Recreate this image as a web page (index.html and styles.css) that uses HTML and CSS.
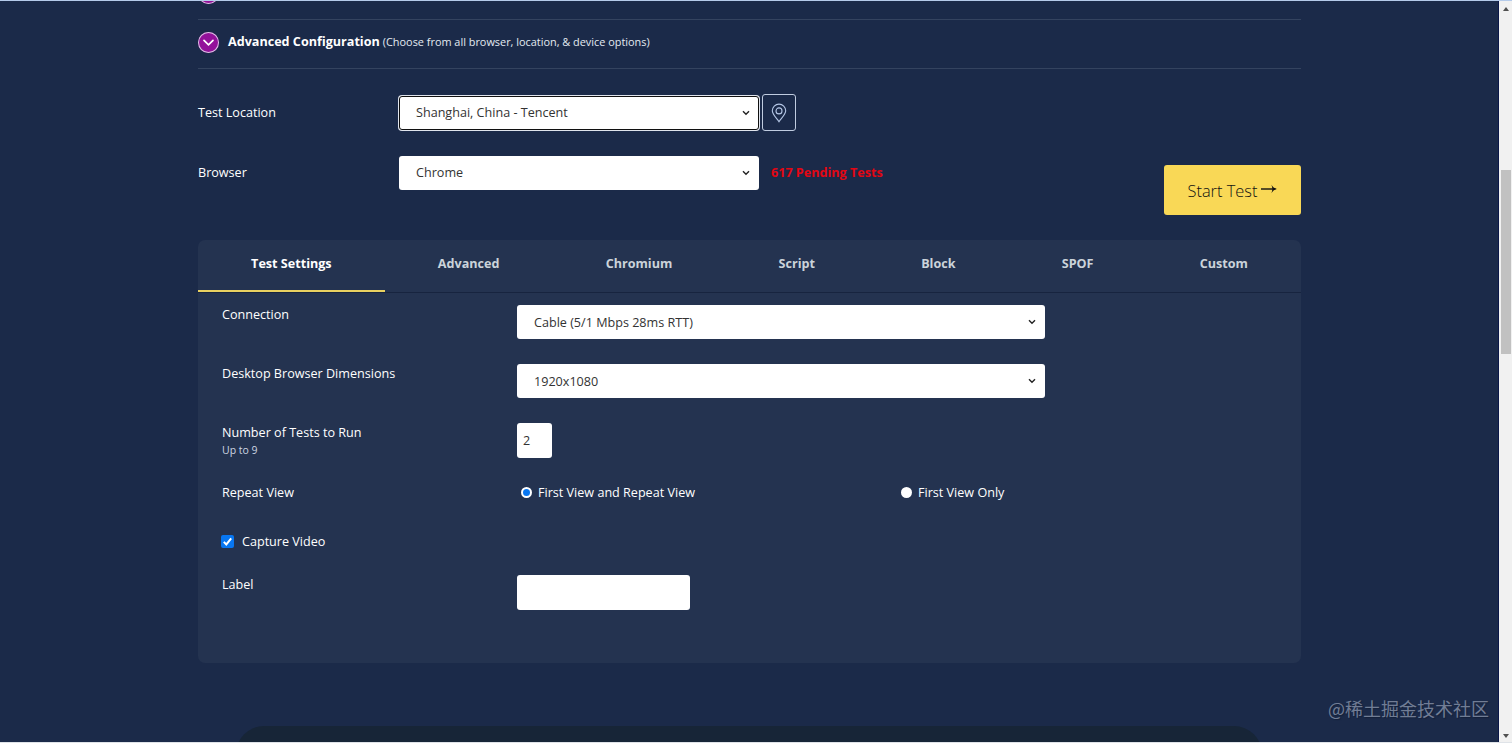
FILE: index.html
```
<!DOCTYPE html>
<html lang="en">
<head>
  <meta charset="UTF-8">
  <title>Advanced Configuration</title>
  <link rel="stylesheet" href="styles.css">
</head>
<body>

<div class="page">
  <main class="content">
    <form class="test-form" onsubmit="event.preventDefault();">
      <div class="previous-option">
        <span class="toggle-icon"></span>
      </div>

      <div class="option-heading">
        <span class="toggle-icon">
          <svg width="21" height="21" viewBox="0 0 21 21"><path d="M6 8.3l4.5 4.6L15 8.3"/></svg>
        </span>
        <strong>Advanced Configuration</strong>
        <small>(Choose from all browser, location, &amp; device options)</small>
      </div>

      <div class="start-area">
        <div class="basic-fields">
          <div class="basic-row">
            <label for="location">Test Location</label>
            <div class="select-wrap focused">
              <select id="location"><option>Shanghai, China - Tencent</option></select>
              <svg class="chevron" width="8" height="6" viewBox="0 0 8 6"><path d="M1 1.2l3 3 3-3"/></svg>
            </div>
            <button type="button" class="map-button" aria-label="Select from map">
              <svg width="16" height="20" viewBox="0 0 16 20">
                <path d="M8 18.7C6 15.6 1.3 11.5 1.3 7.8a6.7 6.7 0 0 1 13.4 0C14.7 11.5 10 15.6 8 18.7z"/>
                <circle cx="8" cy="7.9" r="3"/>
              </svg>
            </button>
          </div>
          <div class="basic-row">
            <label for="browser">Browser</label>
            <div class="select-wrap">
              <select id="browser"><option>Chrome</option></select>
              <svg class="chevron" width="8" height="6" viewBox="0 0 8 6"><path d="M1 1.2l3 3 3-3"/></svg>
            </div>
            <span class="pending">617 Pending Tests</span>
          </div>
        </div>
        <button type="submit" class="start-button">
          <span>Start Test</span>
          <svg width="16" height="10" viewBox="0 0 16 10"><path d="M0 5h14.5"/><path class="head" d="M10.5 .8C11.6 3 13.2 4.4 16 5c-2.8.6-4.4 2-5.5 4.2l1-4.2z"/></svg>
        </button>
      </div>

      <section class="settings">
        <ul class="tabs">
          <li class="active">Test Settings</li>
          <li>Advanced</li>
          <li>Chromium</li>
          <li>Script</li>
          <li>Block</li>
          <li>SPOF</li>
          <li>Custom</li>
        </ul>

        <div class="fields">
          <div class="field">
            <label for="connection">Connection</label>
            <div class="select-wrap">
              <select id="connection"><option>Cable (5/1 Mbps 28ms RTT)</option></select>
              <svg class="chevron" width="8" height="6" viewBox="0 0 8 6"><path d="M1 1.2l3 3 3-3"/></svg>
            </div>
          </div>
          <div class="field">
            <label for="resolution">Desktop Browser Dimensions</label>
            <div class="select-wrap">
              <select id="resolution"><option>1920x1080</option></select>
              <svg class="chevron" width="8" height="6" viewBox="0 0 8 6"><path d="M1 1.2l3 3 3-3"/></svg>
            </div>
          </div>
          <div class="field field-runs">
            <label for="runs">Number of Tests to Run<small>Up to 9</small></label>
            <input type="text" id="runs" class="runs" value="2">
          </div>
          <div class="field field-repeat">
            <span>Repeat View</span>
            <div class="radios">
              <label><input type="radio" name="fvonly" checked>First View and Repeat View</label>
              <label><input type="radio" name="fvonly">First View Only</label>
            </div>
          </div>
          <label class="field-video">
            <input type="checkbox" checked>
            <svg class="tick" width="13" height="13" viewBox="0 0 13 13"><path d="M2.8 6.9l2.5 2.5 4.9-6"/></svg>
            Capture Video
          </label>
          <div class="field">
            <label for="label">Label</label>
            <input type="text" id="label" class="label-input">
          </div>
        </div>
      </section>
    </form>

    <div class="next-section"></div>
  </main>

  <div class="scrollbar">
    <svg width="6" height="4" viewBox="0 0 6 4"><path d="M0 4l3-4 3 4z"/></svg>
    <div class="track"><div class="thumb"></div></div>
    <svg width="6" height="4" viewBox="0 0 6 4"><path d="M0 0h6l-3 4z"/></svg>
  </div>
</div>

<div class="watermark">@稀土掘金技术社区</div>

</body>
</html>
```
FILE: styles.css
```
* {
  box-sizing: border-box;
}

body {
  margin: 0;
  height: 743px;
  overflow: hidden;
  font-family: 'Open Sans', 'Noto Sans CJK SC', sans-serif;
  font-size: 12.6px;
  line-height: 18px;
  color: #fff;
  background: #1b2a49;
}

.page {
  display: flex;
  height: 743px;
  border-top: 1px solid #b5cbea;
  border-bottom: 1px solid #dfe3e8;
}

.content {
  flex: 1;
  overflow: hidden;
  border-right: 1px solid #0b1749;
}

.test-form {
  width: 1103px;
  margin-left: 198px;
}

.previous-option {
  display: flex;
  align-items: flex-start;
  height: 19px;
  border-bottom: 1px solid #34435f;
}

.toggle-icon {
  display: block;
  width: 21px;
  height: 21px;
  border-radius: 50%;
  background: #93119a;
  box-shadow: inset 0 0 0 1px #dcc5e4;
}

.previous-option .toggle-icon {
  margin-top: -18px;
}

.toggle-icon svg {
  display: block;
  fill: none;
  stroke: #fff;
  stroke-width: 1.7;
  stroke-linecap: round;
}

.option-heading {
  display: flex;
  align-items: center;
  height: 49px;
  padding-bottom: 5px;
  border-bottom: 1px solid #34435f;
}

.option-heading .toggle-icon {
  margin: 2px 9px 0 0;
}

.option-heading small {
  margin-left: 3px;
  font-size: 10.9px;
  color: #e4eaf2;
}

.start-area {
  display: flex;
  justify-content: space-between;
  align-items: flex-end;
  height: 171px;
  padding: 25px 0;
}

.basic-fields {
  display: grid;
  gap: 23px;
  align-self: flex-start;
}

.basic-row {
  display: flex;
  align-items: center;
  height: 37px;
}

.basic-row label {
  width: 201px;
}

.basic-row .select-wrap {
  width: 360px;
}

.select-wrap {
  position: relative;
  height: 34px;
}

select,
input[type="text"] {
  display: block;
  height: 100%;
  margin: 0;
  border: 0;
  border-radius: 3px;
  background: #fff;
  color: #333;
  font-family: inherit;
  font-size: 12.6px;
}

select {
  width: 100%;
  padding: 0 17px;
  appearance: none;
}

.focused select {
  border: 1px solid #101010;
  padding: 0 16px;
  box-shadow: 0 0 0 1px #e1e5ed;
}

.chevron {
  position: absolute;
  right: 9px;
  top: 14px;
  fill: none;
  stroke: #222;
  stroke-width: 1.4;
}

.map-button {
  display: flex;
  align-items: center;
  justify-content: center;
  width: 34px;
  height: 37px;
  margin-left: 3px;
  padding: 0;
  border: 1px solid #c0cce0;
  border-radius: 3px;
  background: none;
}

.map-button svg {
  fill: none;
  stroke: #b5c7e6;
  stroke-width: 1.1;
}

.pending {
  margin-left: 12px;
  font-weight: bold;
  color: #e30613;
}

.start-button {
  display: flex;
  align-items: center;
  justify-content: center;
  gap: 4px;
  width: 137px;
  height: 50px;
  padding: 0;
  border: 0;
  border-radius: 3px;
  background: #f9d856;
  color: #111;
  font-family: inherit;
  font-size: 16.4px;
  font-weight: 330;
}

.start-button svg {
  margin-top: -2px;
  stroke: #111;
  stroke-width: 1.4;
}

.start-button .head {
  fill: #111;
  stroke: none;
}

.settings {
  height: 423px;
  border-radius: 7px;
  background: #243350;
}

.tabs {
  display: flex;
  height: 53px;
  margin: 0;
  padding: 0;
  list-style: none;
  border-bottom: 1px solid #17243f;
}

.tabs li {
  flex: 1 1 auto;
  padding-top: 15px;
  text-align: center;
  font-weight: bold;
  color: #cbd3da;
}

.tabs .active {
  color: #fff;
  border-bottom: 2px solid #e9d160;
}

.fields {
  padding: 12px 24px 0;
}

.field {
  display: flex;
  align-items: flex-start;
  height: 59px;
}

.field > :first-child {
  width: 295px;
  padding-top: 1px;
}

.field .select-wrap {
  width: 528px;
}

.field small {
  display: block;
  font-size: 10.5px;
  line-height: 16px;
  color: #cdd5e2;
}

input.runs {
  width: 35px;
  height: 35px;
  padding: 0 6px;
}

.field-repeat {
  height: 49px;
}

.field-repeat > :first-child,
.radios {
  padding-top: 2px;
}

.radios {
  display: flex;
}

.radios label {
  display: flex;
  align-items: center;
  height: 18px;
  width: 380px;
}

.radios input {
  width: 11px;
  height: 11px;
  margin: -2px 6px 0 4px;
  border-radius: 50%;
  background: #fff;
  appearance: none;
}

.radios input:checked {
  border: 2px solid #fff;
  background: #0877f2;
}

.field-video {
  display: flex;
  align-items: center;
  position: relative;
  height: 21px;
  margin-bottom: 23px;
}

.field-video input {
  width: 13px;
  height: 13px;
  margin: 0 8px 0 -1px;
  border-radius: 2px;
  background: #0877f2;
  appearance: none;
}

.tick {
  position: absolute;
  left: -1px;
  top: 4px;
  fill: none;
  stroke: #fff;
  stroke-width: 2;
}

input.label-input {
  width: 173px;
  height: 35px;
}

.next-section {
  width: 1026px;
  height: 80px;
  margin: 63px 0 0 236px;
  border-radius: 28px;
  background: #172537;
}

.scrollbar {
  display: flex;
  flex-direction: column;
  align-items: center;
  width: 13px;
  padding: 6px 0 4px;
  background: #f1f1f1;
}

.scrollbar svg {
  fill: #505050;
}

.track {
  flex: 1;
  width: 10px;
  padding-top: 159px;
}

.thumb {
  height: 184px;
  background: #c1c1c1;
}

.watermark {
  position: absolute;
  right: 23px;
  top: 695px;
  font-size: 18px;
  line-height: 26px;
  color: #717d95;
  font-family: 'Noto Sans CJK SC', sans-serif;
  text-shadow: 1px 1px 1px #14203a;
}
```
